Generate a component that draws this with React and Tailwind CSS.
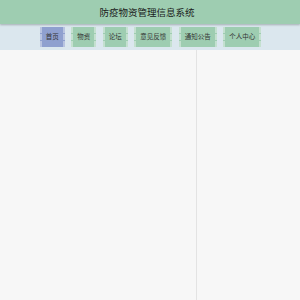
import React from 'react';

const navItems = ['首页', '物资', '论坛', '意见反馈', '通知公告', '个人中心'];

const App = () => {
  return (
    <div className="w-[300px] h-[300px] flex flex-col bg-[#f7f7f7] overflow-hidden" style={{ fontFamily: '"Noto Sans CJK SC", "Noto Sans", sans-serif' }}>
      {/* Title bar */}
      <header className="h-[24px] bg-[#9ecdb1] flex items-center justify-center shadow-[0_1px_2px_rgba(0,0,0,0.25)] z-10">
        <h1 className="text-[9.5px] text-[#1a1a1a] pr-[6px]">防疫物资管理信息系统</h1>
      </header>

      {/* Nav */}
      <nav className="h-[26px] bg-[#dbe7ee] flex items-center justify-center gap-[6.5px] pl-[1px]">
        {navItems.map((item, i) => (
          <button
            key={item}
            className={`h-[20px] px-[4px] border-x-2 border-dashed text-[6.5px] text-[#333] flex items-center ${
              i === 0 ? 'bg-[#8fa0cf] border-[#b9c4e0]' : 'bg-[#9ecdb1] border-[#c4e0cf]'
            }`}
          >
            {item}
          </button>
        ))}
      </nav>

      {/* Content */}
      <main className="flex-1 flex">
        <div className="w-[197px] border-r border-[#e3e3e3]"></div>
        <div className="flex-1"></div>
      </main>
    </div>
  );
};

export default App;
